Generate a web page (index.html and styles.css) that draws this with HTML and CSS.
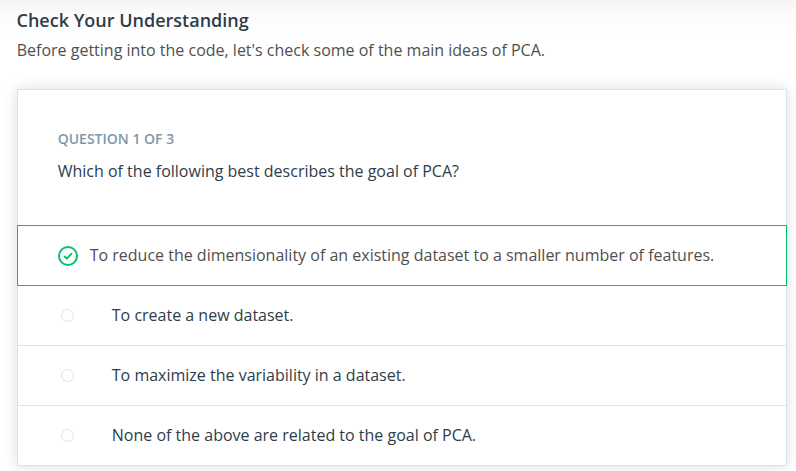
FILE: index.html
```html
<!DOCTYPE html>
<html lang="en">
<head>
<meta charset="utf-8">
<title>Check Your Understanding</title>
<link rel="stylesheet" href="styles.css">
</head>
<body>
<main class="page">
  <h1 class="title">Check Your Understanding</h1>
  <p class="intro">Before getting into the code, let's check some of the main ideas of PCA.</p>
  <section class="quiz">
    <header class="quiz-head">
      <h2 class="count">QUESTION 1 OF 3</h2>
      <p class="question">Which of the following best describes the goal of PCA?</p>
    </header>
    <ul class="answers">
      <li class="answer correct">
        <svg class="check" viewBox="0 0 20 20"><circle cx="10" cy="10" r="9"/><path d="M6.6 10.6l2.2 2 4.5-4.7"/></svg>
        <span class="label">To reduce the dimensionality of an existing dataset to a smaller number of features.</span>
      </li>
      <li class="answer"><span class="radio"></span><span class="label">To create a new dataset.</span></li>
      <li class="answer"><span class="radio"></span><span class="label">To maximize the variability in a dataset.</span></li>
      <li class="answer"><span class="radio"></span><span class="label">None of the above are related to the goal of PCA.</span></li>
    </ul>
  </section>
</main>
</body>
</html>
```
FILE: styles.css
```css
* { box-sizing: border-box; margin: 0; padding: 0; }
body {
  height: 471px;
  overflow: hidden;
  background: #fff linear-gradient(#f5f5f5, #fcfcfc 16px, #fff 40px) no-repeat;
  color: #4f4f4f;
  font: 16px/24px "Open Sans", sans-serif;
}
.page { padding: 8px 9px 0 17px; }
.title { margin-left: -0.5px; font-size: 18px; font-weight: 600; line-height: 24px; color: #2e3d49; }
.intro { margin: 6px 0 0 -0.3px; }
.quiz {
  height: 377px;
  margin-top: 27px;
  border: 1px solid #dbe2e8;
  background: #fff;
  box-shadow: 0 0 12px rgba(46, 61, 73, 0.18);
}
.quiz-head { height: 135px; padding: 37px 40px 0 39.7px; color: #2e3d49; }
.count { font-size: 14px; font-weight: 600; line-height: 24px; color: #7d97ad; }
.question { margin-top: 8px; }
.answers { list-style: none; }
.answer {
  display: flex;
  align-items: center;
  height: 60px;
  padding-left: 43px;
  border-bottom: 1px solid #dbe2e8;
  color: #2e3d49;
}
.answer:last-child { height: 59px; border-bottom: 0; }
.label { padding-bottom: 1px; }
.correct {
  height: 61px;
  margin: 0 -1px;
  padding-left: 40px;
  border: 1px solid #02c26a;
  color: #4f4f4f;
}
.correct .label { padding-bottom: 2px; }
.radio { width: 13px; height: 13px; margin-right: 37.8px; border: 1px solid #dbe2e8; border-radius: 50%; }
.check { width: 20px; height: 20px; margin-right: 11.7px; fill: none; stroke: #02c26a; stroke-width: 2; stroke-linecap: round; stroke-linejoin: round; }
```
